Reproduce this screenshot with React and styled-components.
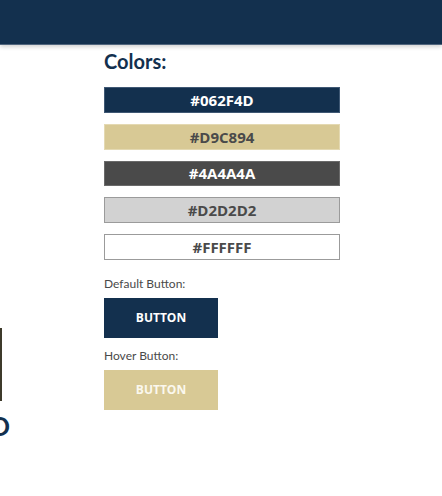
import React from "react";
import styled, { createGlobalStyle } from "styled-components";

const NAVY = "#13304E";
const GOLD = "#D8C995";
const CHARCOAL = "#4A4A4A";

const GlobalStyle = createGlobalStyle`
  html, body {
    margin: 0;
    padding: 0;
    background: #ffffff;
  }
  body {
    font-family: Lato, "Open Sans", "Liberation Sans", sans-serif;
    color: ${CHARCOAL};
    overflow: hidden;
  }
`;

const Header = styled.header`
  height: 45px;
  background: ${NAVY};
  border-bottom: 1px solid #50657d;
  box-sizing: border-box;
  box-shadow: 0 2px 4px rgba(0, 0, 0, 0.18);
`;

const Main = styled.main`
  display: flex;
  padding-top: 4px;
`;

const LeftRail = styled.aside`
  width: 10px;
  flex-shrink: 0;
  overflow: hidden;
  display: flex;
  flex-direction: column;
  align-items: flex-end;
`;

const EdgeBox = styled.div`
  flex-shrink: 0;
  width: 120px;
  height: 73px;
  margin-top: 279px;
  margin-right: 8px;
  border-right: 2px solid #3e3a2b;
`;

const EdgeTitle = styled.h2`
  flex-shrink: 0;
  margin: 10px 0 0;
  font-family: Lato, "Liberation Sans", sans-serif;
  font-weight: 700;
  font-size: 26px;
  line-height: 31px;
  color: ${NAVY};
  white-space: nowrap;
`;

const Content = styled.section`
  margin-left: 94px;
  width: 236px;
  display: flex;
  flex-direction: column;
`;

const Heading = styled.h1`
  margin: 0 0 14px;
  font-family: Lato, "Liberation Sans", sans-serif;
  font-weight: 700;
  font-size: 20px;
  line-height: 24px;
  color: ${NAVY};
`;

const SwatchList = styled.div`
  display: flex;
  flex-direction: column;
  gap: 11px;
  margin-bottom: 6px;
`;

const Swatch = styled.div`
  box-sizing: border-box;
  height: 25.75px;
  display: flex;
  align-items: center;
  justify-content: center;
  background: ${(p) => p.$bg};
  color: ${(p) => p.$fg};
  border: 1px solid ${(p) => p.$border};
  font-family: "Open Sans", "Liberation Sans", sans-serif;
  font-weight: 700;
  font-size: 15px;
`;

const Label = styled.p`
  margin: 11px 0 7px;
  font-family: Lato, "Liberation Sans", sans-serif;
  font-size: 12px;
  line-height: 14px;
  color: ${CHARCOAL};
`;

const Button = styled.button`
  width: 114px;
  height: 40px;
  padding: 0;
  border: none;
  background: ${(p) => (p.$hover ? GOLD : NAVY)};
  color: ${(p) => (p.$hover ? "#fbf8ee" : "#ffffff")};
  font-family: "Open Sans", "Liberation Sans", sans-serif;
  font-weight: 700;
  font-size: 12px;
  cursor: pointer;
`;

const swatches = [
  { hex: "#062F4D", bg: NAVY, fg: "#ffffff", border: "#3f5874" },
  { hex: "#D9C894", bg: GOLD, fg: CHARCOAL, border: "#e4d9b2" },
  { hex: "#4A4A4A", bg: CHARCOAL, fg: "#ffffff", border: "#6a6a6a" },
  { hex: "#D2D2D2", bg: "#D2D2D2", fg: CHARCOAL, border: "#9b9b9b" },
  { hex: "#FFFFFF", bg: "#FFFFFF", fg: CHARCOAL, border: "#9b9b9b" },
];

export default function App() {
  return (
    <>
      <GlobalStyle />
      <Header />
      <Main>
        <LeftRail>
          <EdgeBox />
          <EdgeTitle>FEATURED</EdgeTitle>
        </LeftRail>
        <Content>
          <Heading>Colors:</Heading>
          <SwatchList>
            {swatches.map((s) => (
              <Swatch key={s.hex} $bg={s.bg} $fg={s.fg} $border={s.border}>
                {s.hex}
              </Swatch>
            ))}
          </SwatchList>
          <Label>Default Button:</Label>
          <Button>BUTTON</Button>
          <Label>Hover Button:</Label>
          <Button $hover>BUTTON</Button>
        </Content>
      </Main>
    </>
  );
}
